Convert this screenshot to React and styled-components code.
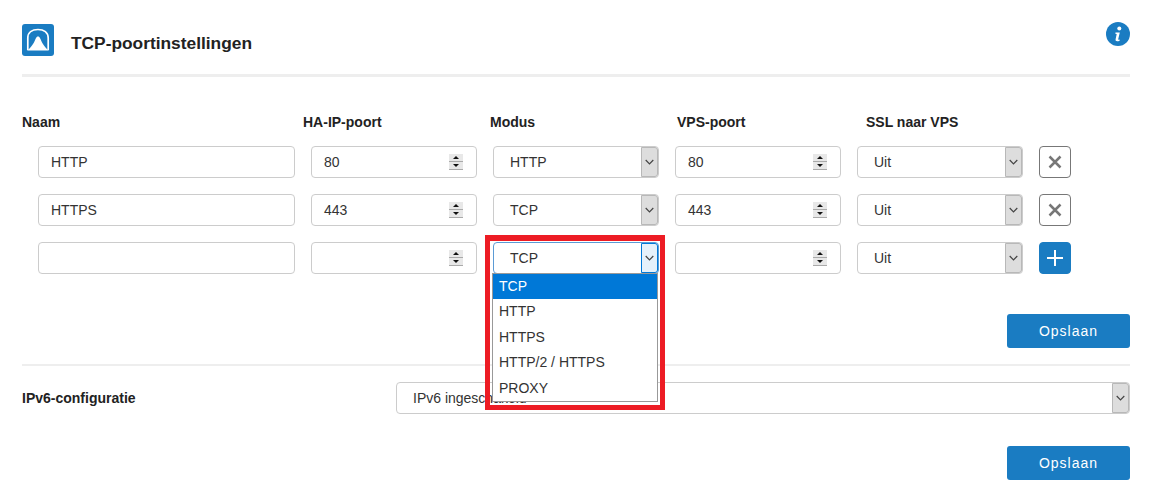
import React from 'react';
import styled, { createGlobalStyle } from 'styled-components';

const blue = '#1a7cc2';

const GlobalStyle = createGlobalStyle`
  html, body {
    margin: 0;
    background: #fff;
    font-family: "Liberation Sans", Arial, sans-serif;
    color: #222;
  }
  * { box-sizing: border-box; }
`;

const Page = styled.div`
  width: 1153px;
  height: 501px;
  padding: 24px 23px 0 22px;
  overflow: hidden;
`;

const Header = styled.header`
  display: flex;
  align-items: flex-start;
  gap: 17px;
  height: 53px;
  padding-bottom: 18px;
  border-bottom: 3px solid #eee;
`;

const Title = styled.h1`
  flex: 1;
  margin: 0;
  font-size: 17.33px;
  font-weight: bold;
  line-height: 38px;
`;

const InfoIcon = styled.svg`
  width: 24px;
  height: 24px;
  margin-top: -2px;
`;

const LabelRow = styled.div`
  display: flex;
  margin-top: 37px;
  margin-bottom: 15px;
`;

const ColumnLabel = styled.div`
  width: ${(p) => p.$width}px;
  font-size: 14px;
  font-weight: bold;
  line-height: 17px;
`;

const Rows = styled.div`
  display: flex;
  flex-direction: column;
  gap: 16px;
  padding-left: 16px;
`;

const Row = styled.div`
  display: flex;
  gap: 16px;
`;

const Field = styled.div`
  position: relative;
  display: flex;
  align-items: center;
  justify-content: space-between;
  flex: ${(p) => (p.$grow ? 1 : 'none')};
  width: ${(p) => p.$width || 166}px;
  height: 32px;
  padding-left: ${(p) => p.$pad || 12}px;
  border: 1px solid ${(p) => (p.$focus ? '#5b9bd5' : '#ccc')};
  border-radius: 4px;
  background: #fff;
  font-size: 14px;
  color: #333;
`;

const SpinBox = styled.div`
  display: flex;
  flex-direction: column;
  width: 14px;
  margin-right: 13px;
`;

const SpinPart = styled.div`
  display: flex;
  align-items: center;
  justify-content: center;
  height: 8px;
  background: #e8e8e8;
  border-bottom: 1px solid #aaa;

  &::after {
    content: '';
    border-left: 3px solid transparent;
    border-right: 3px solid transparent;
    border-bottom: ${(p) => (p.$down ? '0' : '3px solid #111')};
    border-top: ${(p) => (p.$down ? '3px solid #111' : '0')};
  }
`;

const ArrowBox = styled.div`
  display: flex;
  align-items: center;
  justify-content: center;
  align-self: stretch;
  width: 17px;
  background: ${(p) => (p.$focus ? '#e5f1fb' : '#ddd')};
  border: 1px solid ${(p) => (p.$focus ? '#0078d7' : '#b8b8b8')};
  border-radius: 0 3px 3px 0;
`;

const Chevron = styled.svg`
  width: 9px;
  height: 6px;
  fill: none;
  stroke: #444;
  stroke-width: 1.2;
`;

const SquareButton = styled.button`
  display: flex;
  align-items: center;
  justify-content: center;
  width: 32px;
  height: 32px;
  padding: 0;
  border: 1px solid ${(p) => (p.$primary ? blue : '#777')};
  border-radius: 4px;
  background: ${(p) => (p.$primary ? blue : '#fff')};
`;

const Dropdown = styled.ul`
  position: absolute;
  top: 30px;
  left: -2px;
  width: 166px;
  margin: 0;
  padding: 0;
  list-style: none;
  border: 1px solid #999;
  background: #fff;
  z-index: 3;
`;

const Option = styled.li`
  height: 25.4px;
  padding-left: 6px;
  line-height: 25.4px;
  font-size: 14px;
  color: ${(p) => (p.$active ? '#fff' : '#333')};
  background: ${(p) => (p.$active ? '#0078d7' : '#fff')};
`;

const Highlight = styled.div`
  position: absolute;
  top: -8px;
  left: -9px;
  width: 180px;
  height: 175px;
  border: 5px solid #ed1c24;
  border-top-width: 6px;
  pointer-events: none;
  z-index: 4;
`;

const SaveRow = styled.div`
  display: flex;
  justify-content: flex-end;
  margin-top: ${(p) => p.$top}px;
`;

const SaveButton = styled.button`
  width: 123px;
  height: 34px;
  border: none;
  border-radius: 3px;
  background: ${blue};
  color: #fff;
  font-family: inherit;
  font-size: 14px;
  letter-spacing: 1px;
`;

const Divider = styled.hr`
  height: 2px;
  margin: 16px 0 16px;
  border: none;
  background: #eee;
`;

const ConfigRow = styled.div`
  display: flex;
  align-items: center;
`;

const ConfigLabel = styled.div`
  width: 374px;
  font-size: 14px;
  font-weight: bold;
`;

const Logo = () => (
  <svg width="32" height="32" viewBox="0 0 32 32">
    <rect width="32" height="32" rx="3" fill={blue} />
    <path d="M5.800 26V14C5.800 8.500 10 5.500 16 5.500S26.200 8.500 26.200 14V26" fill="none" stroke="#fff" strokeWidth="1.700" />
    <path d="M5 26.500C9 24 12 19 13.500 15 14.500 13 15 12.500 16 12.500S17.500 13 18.500 15C20 19 23 24 27 26.500z" fill="#fff" />
  </svg>
);

const Spinner = () => (
  <SpinBox>
    <SpinPart />
    <SpinPart $down />
  </SpinBox>
);

const SelectField = ({ value, focus, width, grow, pad = 16, children }) => (
  <Field $width={width} $grow={grow} $pad={pad} $focus={focus}>
    {value}
    <ArrowBox $focus={focus}>
      <Chevron viewBox="0 0 9 6">
        <path d="M.7 1l3.800 3.800L8.300 1" />
      </Chevron>
    </ArrowBox>
    {children}
  </Field>
);

const rows = [
  { name: 'HTTP', port: '80', mode: 'HTTP', vps: '80' },
  { name: 'HTTPS', port: '443', mode: 'TCP', vps: '443' },
];

const options = ['TCP', 'HTTP', 'HTTPS', 'HTTP/2 / HTTPS', 'PROXY'];

const App = () => (
  <Page>
    <GlobalStyle />
    <Header>
      <Logo />
      <Title>TCP-poortinstellingen</Title>
      <InfoIcon viewBox="0 0 24 24">
        <circle cx="12" cy="12" r="12" fill={blue} />
        <circle cx="13.300" cy="6.600" r="2" fill="#fff" />
        <path d="M9.500 10.500h4.300l-1.600 6.800c-.1.500.3.700 1.600.2l-.2 1.200c-2.300 1-4.500.8-4-1.400l1.100-5.300-1.400-.2z" fill="#fff" />
      </InfoIcon>
    </Header>

    <LabelRow>
      <ColumnLabel $width={281}>Naam</ColumnLabel>
      <ColumnLabel $width={187}>HA-IP-poort</ColumnLabel>
      <ColumnLabel $width={187}>Modus</ColumnLabel>
      <ColumnLabel $width={189}>VPS-poort</ColumnLabel>
      <ColumnLabel $width={160}>SSL naar VPS</ColumnLabel>
    </LabelRow>

    <Rows>
      {rows.map((row) => (
        <Row key={row.name}>
          <Field $width={257}>{row.name}</Field>
          <Field>{row.port}<Spinner /></Field>
          <SelectField value={row.mode} />
          <Field>{row.vps}<Spinner /></Field>
          <SelectField value="Uit" />
          <SquareButton aria-label="Verwijderen">
            <svg width="14" height="14" viewBox="0 0 14 14">
              <path d="M1.500 1.500l11 11M12.500 1.500l-11 11" stroke="#777" strokeWidth="2.500" />
            </svg>
          </SquareButton>
        </Row>
      ))}
      <Row>
        <Field $width={257} />
        <Field><span /><Spinner /></Field>
        <SelectField value="TCP" focus>
          <Dropdown>
            {options.map((option, i) => (
              <Option key={option} $active={i === 0}>{option}</Option>
            ))}
          </Dropdown>
          <Highlight />
        </SelectField>
        <Field><span /><Spinner /></Field>
        <SelectField value="Uit" />
        <SquareButton $primary aria-label="Toevoegen">
          <svg width="16" height="16" viewBox="0 0 16 16">
            <path d="M8 0v16M0 8h16" stroke="#fff" strokeWidth="2" />
          </svg>
        </SquareButton>
      </Row>
    </Rows>

    <SaveRow $top={40}>
      <SaveButton>Opslaan</SaveButton>
    </SaveRow>

    <Divider />

    <ConfigRow>
      <ConfigLabel>IPv6-configuratie</ConfigLabel>
      <SelectField value="IPv6 ingeschakeld" grow />
    </ConfigRow>

    <SaveRow $top={32}>
      <SaveButton>Opslaan</SaveButton>
    </SaveRow>
  </Page>
);

export default App;
